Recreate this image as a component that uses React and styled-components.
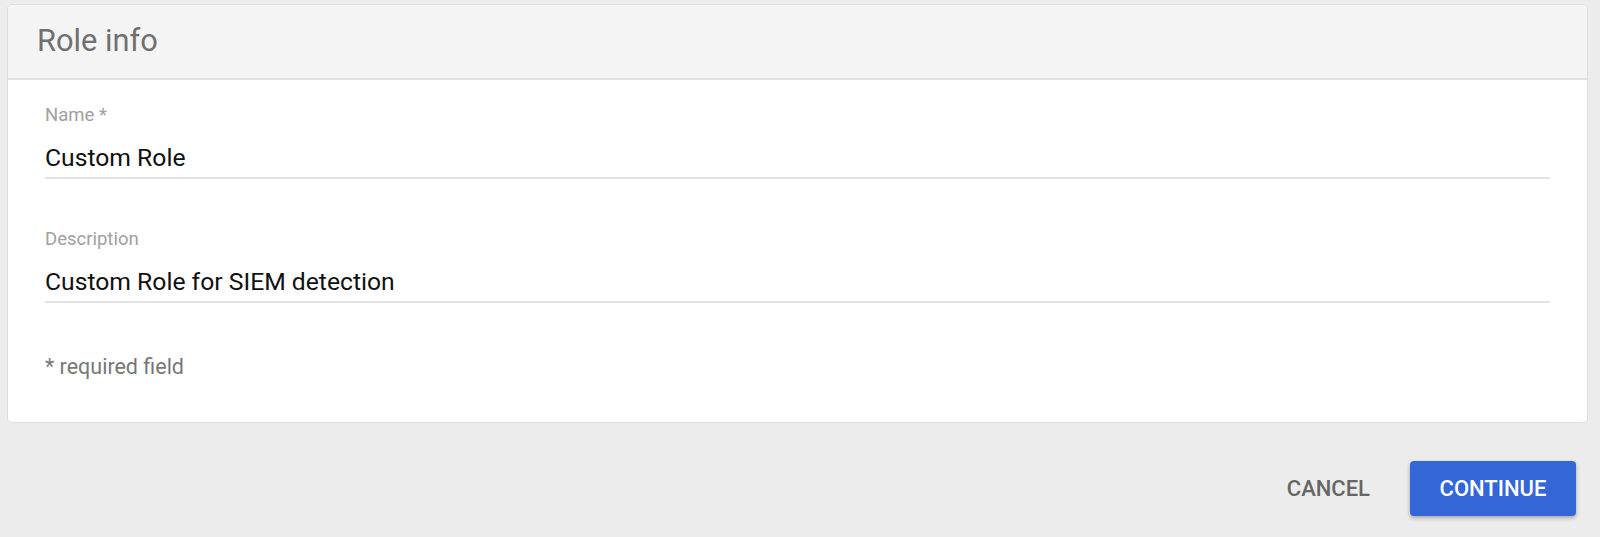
import React from "react";
import styled, { createGlobalStyle } from "styled-components";

const Global = createGlobalStyle`
  html, body { margin: 0; padding: 0; }
  body {
    background: #ececec;
    font-family: Roboto, "Noto Sans", "Liberation Sans", sans-serif;
    -webkit-font-smoothing: antialiased;
  }
`;

const Page = styled.div`
  padding: 4px 12px 0 7px;
  height: 537px;
  box-sizing: border-box;
  display: flex;
  flex-direction: column;
`;

const Card = styled.section`
  background: #fff;
  border: 1px solid #dedee2;
  border-radius: 5px;
  overflow: hidden;
`;

const CardHeader = styled.header`
  height: 75px;
  box-sizing: border-box;
  background: #f4f4f4;
  border-bottom: 2px solid #e2e2e4;
  display: flex;
  align-items: center;
  padding: 0 29px 1px;
`;

const Title = styled.h2`
  margin: 0;
  font-size: 30.8px;
  font-weight: 400;
  color: #707070;
  line-height: 1;
`;

const CardBody = styled.div`
  padding: 25px 37px 43px 37px;
  display: flex;
  flex-direction: column;
`;

const Field = styled.div`
  display: flex;
  flex-direction: column;
  margin-bottom: ${(p) => p.$gap || 0}px;
`;

const Label = styled.label`
  font-size: 18.5px;
  color: #a0a0a0;
  line-height: 20px;
`;

const Value = styled.div`
  font-size: 24.7px;
  color: #111;
  line-height: 30px;
  margin-top: 18px;
  padding-bottom: 4px;
  border-bottom: 2px solid #e3e3e3;
`;

const Hint = styled.p`
  margin: 0;
  font-size: 21.5px;
  color: #777;
  line-height: 24px;
`;

const Footer = styled.div`
  display: flex;
  justify-content: flex-end;
  align-items: center;
  padding: 38px 12px 0 0;
  gap: 20px;
`;

const TextButton = styled.button`
  background: none;
  border: none;
  font-family: inherit;
  font-size: 22px;
  font-weight: 500;
  color: #666;
  padding: 0 20px;
  height: 55px;
  cursor: pointer;
`;

const PrimaryButton = styled.button`
  background: #3367d6;
  border: none;
  border-radius: 4px;
  color: #fff;
  font-family: inherit;
  font-size: 22px;
  font-weight: 500;
  height: 55px;
  width: 166px;
  box-shadow: 0 2px 4px rgba(0, 0, 0, 0.3);
  cursor: pointer;
`;

export default function App() {
  return (
    <>
      <Global />
      <Page>
        <Card>
          <CardHeader>
            <Title>Role info</Title>
          </CardHeader>
          <CardBody>
            <Field $gap={50}>
              <Label>Name *</Label>
              <Value>Custom Role</Value>
            </Field>
            <Field $gap={52}>
              <Label>Description</Label>
              <Value>Custom Role for SIEM detection</Value>
            </Field>
            <Hint>* required field</Hint>
          </CardBody>
        </Card>
        <Footer>
          <TextButton>CANCEL</TextButton>
          <PrimaryButton>CONTINUE</PrimaryButton>
        </Footer>
      </Page>
    </>
  );
}
